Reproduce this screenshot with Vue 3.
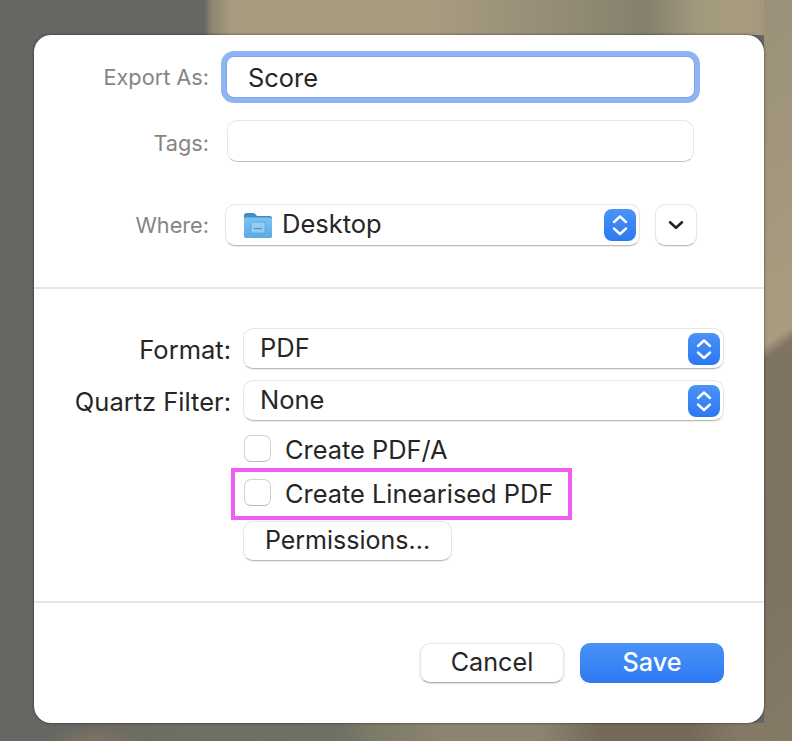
<template>
  <div class="desktop">
    <div class="dialog">
      <section class="name-section">
        <div class="row">
          <label class="dim-label">Export As:</label>
          <div class="name-input">Score</div>
        </div>
        <div class="row tags-row">
          <label class="dim-label tags-label">Tags:</label>
          <div class="tags-input"></div>
        </div>
        <div class="row where-row">
          <label class="dim-label">Where:</label>
          <div class="popup where-popup">
            <svg class="folder" width="30" height="28" viewBox="0 0 30 28">
              <defs>
                <linearGradient id="folderBody" x1="0" y1="0" x2="0" y2="1">
                  <stop offset="0" stop-color="#7cc4f2" />
                  <stop offset="1" stop-color="#5ba9e4" />
                </linearGradient>
              </defs>
              <path d="M1 4.5C1 3 2 2 3.5 2H10c1 0 1.6.4 2.3 1.1L14 5h13c1.200 0 2 .8 2 2v4H1z" fill="#3f8ccf" />
              <rect x="1" y="6.500" width="28" height="20.500" rx="1.800" fill="url(#folderBody)" />
              <rect x="8" y="11" width="14" height="11" rx="1" fill="#8fcdf5" stroke="#58a2da" stroke-width="0.800" />
              <rect x="11" y="17" width="8" height="1.200" fill="#4f8fc4" />
            </svg>
            <span class="popup-text">Desktop</span>
            <span class="stepper">
              <svg width="32" height="32" viewBox="0 0 32 32"><path d="M10 13l6-5.500 6 5.500M10 19.500l6 5.500 6-5.500" fill="none" stroke="#fff" stroke-width="2.400" stroke-linecap="round" stroke-linejoin="round" /></svg>
            </span>
          </div>
          <div class="expand-btn">
            <svg width="16" height="10" viewBox="0 0 16 10"><path d="M2 2.300l6 5.400 6-5.400" fill="none" stroke="#222" stroke-width="2.600" stroke-linecap="round" stroke-linejoin="round" /></svg>
          </div>
        </div>
      </section>

      <section class="options-section">
        <div class="row option-row" v-for="opt in popups" :key="opt.label">
          <label class="option-label">{{ opt.label }}</label>
          <div class="popup option-popup">
            <span class="popup-text">{{ opt.value }}</span>
            <span class="stepper">
              <svg width="32" height="32" viewBox="0 0 32 32"><path d="M10 13l6-5.500 6 5.500M10 19.500l6 5.500 6-5.500" fill="none" stroke="#fff" stroke-width="2.400" stroke-linecap="round" stroke-linejoin="round" /></svg>
            </span>
          </div>
        </div>
        <div class="check-row first-check">
          <span class="checkbox"></span>
          <span class="check-text">Create PDF/A</span>
        </div>
        <div class="check-row second-check">
          <span class="checkbox"></span>
          <span class="check-text">Create Linearised PDF</span>
          <div class="highlight"></div>
        </div>
        <div class="permissions">Permissions...</div>
      </section>

      <section class="actions">
        <button class="btn cancel">Cancel</button>
        <button class="btn save">Save</button>
      </section>
    </div>
  </div>
</template>

<script setup>
const popups = [
  { label: 'Format:', value: 'PDF' },
  { label: 'Quartz Filter:', value: 'None' }
]
</script>

<style>
html, body {
  margin: 0;
  background: #666663;
}
</style>

<style scoped>
* {
  box-sizing: border-box;
}
.desktop {
  width: 792px;
  height: 741px;
  overflow: hidden;
  padding: 35px 0 0 34px;
  font-family: Inter, "Liberation Sans", sans-serif;
  color: #262626;
  background-color: #666663;
  background-repeat: no-repeat;
  background-image:
    linear-gradient(145deg, #9b917a 0, #a89c80 270px, #a89c80 283px, #7f7361 295px, #7d7260 470px, #857a66 100%),
    radial-gradient(ellipse 50px 14px at 95px 18px, rgba(134, 118, 98, 0.8), rgba(134, 118, 98, 0)),
    linear-gradient(to right, #666663 0, #666663 204px, #8d8672 212px, #a89c80 232px, #a89c80 430px, #9a917a 520px, #8a8470 620px, #85806c 645px, #a39a7e 700px, #a89c80 740px, #9c917a 792px),
    linear-gradient(to right, #666663 0, #666663 50px, #6a6a62 90px, #6e6f65 200px, #6f7066 340px, #7d7a68 372px, #8a8470 440px, #8a8470 540px, #75695a 600px, #75695a 690px, #857a66 740px, #857a66 792px);
  background-size: 28px 741px, 792px 18px, 792px 35px, 792px 18px;
  background-position: right top, left bottom, left top, left bottom;
}
.dialog {
  width: 730px;
  height: 688px;
  background: #fff;
  border-radius: 17px;
  box-shadow: 0 0 3px rgba(0, 0, 0, 0.55);
  overflow: hidden;
}
.row {
  display: flex;
  align-items: center;
}

/* top part */
.name-section {
  height: 254px;
  padding-top: 22px;
  border-bottom: 2px solid #e6e6e6;
}
.dim-label {
  width: 175px;
  flex: none;
  text-align: right;
  font-size: 21.7px;
  color: #858585;
}
.tags-label {
  padding-top: 3px;
}
.name-input {
  width: 467px;
  height: 40px;
  margin-left: 18px;
  padding-left: 21px;
  line-height: 41px;
  font-size: 25.4px;
  background: #fff;
  border-radius: 7px;
  box-shadow: 0 0 0 1px #7ea4ea, 0 0 0 6px #90b4f2;
}
.tags-row {
  margin-top: 23px;
}
.tags-input {
  width: 467px;
  height: 42px;
  margin-left: 18px;
  border-radius: 10px;
  border: 1px solid #e8e8e8;
  border-bottom: 1px solid #c0c0c0;
}
.where-row {
  margin-top: 42px;
}
.popup {
  display: flex;
  align-items: center;
  position: relative;
  background: #fff;
  border-radius: 10px;
  border: 1px solid #e6e6e6;
  border-bottom: 1px solid #bcbcbc;
  box-shadow: 0 1px 1px rgba(0, 0, 0, 0.08);
}
.popup-text {
  font-size: 25.5px;
  padding-bottom: 3px;
}
.where-popup {
  width: 415px;
  height: 42px;
  margin-left: 16px;
  padding-left: 17px;
}
.folder {
  margin-right: 9px;
  flex: none;
}
.stepper {
  position: absolute;
  right: 3px;
  top: 4px;
  width: 32px;
  height: 32px;
  border-radius: 8px;
  background: linear-gradient(to bottom, #4b93f6, #2c78f2);
}
.stepper svg {
  display: block;
}
.expand-btn {
  width: 42px;
  height: 42px;
  margin-left: 15px;
  display: flex;
  align-items: center;
  justify-content: center;
  border-radius: 10px;
  border: 1px solid #e6e6e6;
  border-bottom: 1px solid #bcbcbc;
  box-shadow: 0 1px 1px rgba(0, 0, 0, 0.08);
}

/* middle part */
.options-section {
  height: 314px;
  padding-top: 39px;
  border-bottom: 2px solid #e6e6e6;
}
.option-row + .option-row {
  margin-top: 11px;
}
.option-label {
  width: 197px;
  flex: none;
  text-align: right;
  font-size: 25.5px;
  padding-top: 1px;
}
.option-popup {
  width: 481px;
  height: 41px;
  margin-left: 12px;
  padding-left: 16px;
}
.check-row {
  position: relative;
  display: flex;
  align-items: center;
  height: 27px;
  margin-left: 210px;
  font-size: 25.4px;
}
.check-text {
  margin-top: 1px;
}
.first-check {
  margin-top: 14px;
}
.second-check {
  margin-top: 17px;
}
.checkbox {
  width: 27px;
  height: 27px;
  margin-right: 14px;
  flex: none;
  border-radius: 7px;
  border: 1px solid #d2d2d2;
  border-bottom-color: #bdbdbd;
  background: #fff;
}
.highlight {
  position: absolute;
  left: -13px;
  top: -11px;
  width: 341px;
  height: 52px;
  border: 4px solid #ef5ef0;
}
.permissions {
  width: 209px;
  height: 40px;
  margin: 15px 0 0 209px;
  line-height: 36px;
  text-align: center;
  font-size: 25px;
  border-radius: 10px;
  border: 1px solid #e6e6e6;
  border-bottom: 1px solid #bcbcbc;
  box-shadow: 0 1px 1px rgba(0, 0, 0, 0.08);
}

/* bottom part */
.actions {
  display: flex;
  justify-content: flex-end;
  gap: 16px;
  padding: 40px 40px 0 0;
}
.btn {
  width: 144px;
  height: 40px;
  font: inherit;
  font-size: 25.2px;
  border-radius: 10px;
  padding: 0 0 2px;
}
.cancel {
  color: #262626;
  background: #fff;
  border: 1px solid #e6e6e6;
  border-bottom: 1px solid #b0b0b0;
  box-shadow: 0 1px 2px rgba(0, 0, 0, 0.14);
}
.save {
  color: #fff;
  border: none;
  font-weight: 500;
  background: linear-gradient(to bottom, #4a93f7, #2e78f3);
}
</style>
